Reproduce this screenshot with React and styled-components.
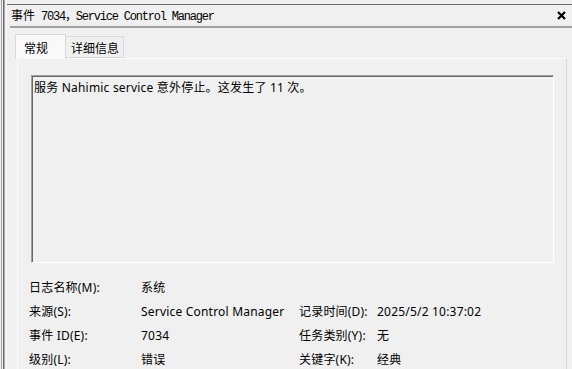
import React from 'react'
import styled, { createGlobalStyle } from 'styled-components'

const Global = createGlobalStyle`
  html, body {
    margin: 0;
    padding: 0;
    background: #f0f0f0;
  }
  body {
    font-family: "Noto Sans", "Noto Sans CJK SC", sans-serif;
    font-size: 12px;
    letter-spacing: 0.2px;
    color: #000;
  }
`

const Frame = styled.div`
  width: 572px;
  height: 369px;
  overflow: hidden;
  display: flex;
  background: #f0f0f0;
`

const Splitter = styled.div`
  width: 7px;
  flex: none;
  box-sizing: border-box;
  border-left: 1px solid #f0f0f0;
  border-right: 1px solid #fbfbfb;
  background: linear-gradient(90deg, #a0a0a0 0 1px, #f0f0f0 1px 2px, #6d6d6d 2px 3px, #a8a8a8 3px 4px, #f0f0f0 4px);
`

const Pane = styled.div`
  flex: 1;
  display: flex;
  flex-direction: column;
  padding-top: 4px;
  min-width: 0;
  & > * {
    flex-shrink: 0;
  }
`

const TitleBar = styled.div`
  height: 21px;
  border-top: 1px solid #6e6e6e;
  display: flex;
  align-items: center;
  justify-content: space-between;
  padding: 0 6px 0 4px;
`

const Title = styled.div`
  white-space: pre;
  font-size: 12px;
  line-height: 16px;
  letter-spacing: 0;
`

const Cjk = styled.span`
  font-family: "Noto Sans CJK SC", sans-serif;
`

const Mono = styled.span`
  font-family: "Liberation Mono", "Noto Sans CJK SC", monospace;
  letter-spacing: -1.2px;
`

const Close = styled.svg`
  width: 9px;
  height: 9px;
  display: block;
`

const Divider = styled.div`
  height: 2px;
  margin-left: 3px;
  background: #a0a0a0;
`

const TabStrip = styled.div`
  display: flex;
  align-items: flex-end;
  margin: 6px 0 0 8px;
  position: relative;
  z-index: 1;
`

const Tab = styled.div`
  box-sizing: border-box;
  height: ${({ $active }) => ($active ? '25px' : '22px')};
  margin-bottom: ${({ $active }) => ($active ? '-1px' : '0')};
  padding: ${({ $active }) => ($active ? '0 8px' : '0 4px 0 5px')};
  min-width: ${({ $active }) => ($active ? '51px' : '0')};
  display: flex;
  align-items: center;
  font-family: "Noto Sans CJK SC", sans-serif;
  font-size: 12px;
  letter-spacing: 0;
  background: ${({ $active }) => ($active ? '#f9f9f9' : '#f0f0f0')};
  border: 1px solid #d9d9d9;
  border-bottom: ${({ $active }) => ($active ? 'none' : '1px solid #d9d9d9')};
  border-left: ${({ $active }) => ($active ? '1px solid #d9d9d9' : 'none')};
`

const Page = styled.div`
  margin: 0 5px 0 10px;
  border-top: 1px solid #fcfcfc;
  border-left: 1px solid #fcfcfc;
  border-right: 1px solid #dadada;
  padding: 16px 0 12px 13px;
  display: flex;
  flex-direction: column;
`

const MessageBox = styled.div`
  box-sizing: border-box;
  width: 523px;
  height: 188px;
  flex-shrink: 0;
  border-top: 1px solid #a0a0a0;
  border-left: 1px solid #a0a0a0;
  border-right: 1px solid #ffffff;
  border-bottom: 1px solid #ffffff;
  box-shadow: inset 1px 1px 0 #696969;
  padding: 4px 2px 0 2px;
  line-height: 16px;
`

const Fields = styled.div`
  display: grid;
  grid-template-columns: 112px 158px 78px 1fr;
  grid-auto-rows: 24px;
  align-items: center;
  margin: 13px 0 0 -2px;
  white-space: nowrap;
`

const Cell = styled.div`
  line-height: 16px;
`

const rows = [
  ['日志名称(M):', '系统', '', ''],
  ['来源(S):', 'Service Control Manager', '记录时间(D):', '2025/5/2 10:37:02'],
  ['事件 ID(E):', '7034', '任务类别(Y):', '无'],
  ['级别(L):', '错误', '关键字(K):', '经典'],
]

export default function App() {
  return (
    <>
      <Global />
      <Frame>
        <Splitter />
        <Pane>
          <TitleBar>
            <Title>
              <Cjk>事件</Cjk><Mono> 7034，Service Control Manager</Mono>
            </Title>
            <Close viewBox="0 0 9 9">
              <path d="M1 1L8 8M8 1L1 8" stroke="#000" strokeWidth="2.2" />
            </Close>
          </TitleBar>
          <Divider />
          <TabStrip>
            <Tab $active>常规</Tab>
            <Tab>详细信息</Tab>
          </TabStrip>
          <Page>
            <MessageBox>服务 Nahimic service 意外停止。这发生了 11 次。</MessageBox>
            <Fields>
              {rows.map((r, i) =>
                r.map((c, j) => <Cell key={`${i}-${j}`}>{c}</Cell>)
              )}
            </Fields>
          </Page>
        </Pane>
      </Frame>
    </>
  )
}
